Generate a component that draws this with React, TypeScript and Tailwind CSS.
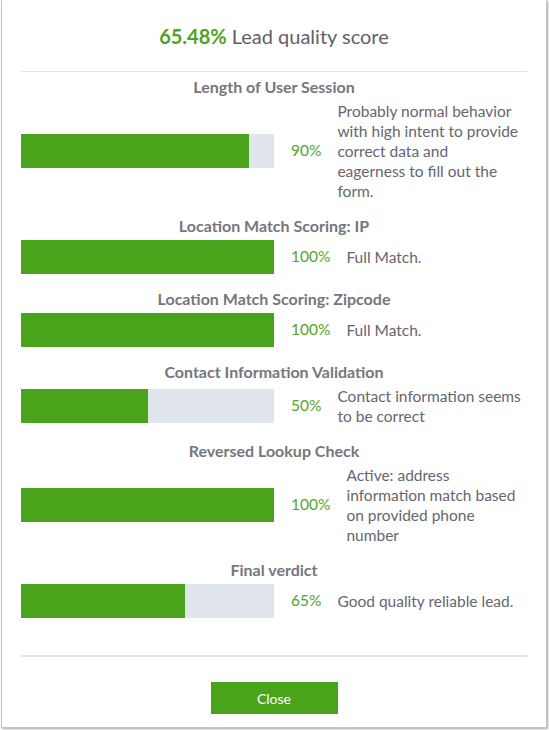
const rows = [
  {
    title: "Length of User Session",
    pct: 90,
    desc: "Probably normal behavior\nwith high intent to provide\ncorrect data and\neagerness to fill out the\nform.",
  },
  { title: "Location Match Scoring: IP", pct: 100, desc: "Full Match." },
  { title: "Location Match Scoring: Zipcode", pct: 100, desc: "Full Match." },
  { title: "Contact Information Validation", pct: 50, desc: "Contact information seems\nto be correct" },
  {
    title: "Reversed Lookup Check",
    pct: 100,
    desc: "Active: address\ninformation match based\non provided phone\nnumber",
  },
  { title: "Final verdict", pct: 65, desc: "Good quality reliable lead." },
];

export default function App() {
  return (
    <div className="w-[549px] h-[730px] bg-white pl-[1px] pr-[2px] pb-[2px] font-['Lato','Liberation_Sans',sans-serif]">
      <div className="h-full border border-t-0 border-[#c4c4c4] shadow-[1px_1px_2px_rgba(0,0,0,0.35)] bg-white px-[19px] flex flex-col">
        <div className="h-[71px] flex items-center justify-center text-[20px] text-[#5f5f67] pt-[1px]">
          <span className="font-bold text-[#4ea322]">65.48%</span>
          <span className="ml-[5px]">Lead quality score</span>
        </div>
        <div className="h-px bg-[#dfe3e9]" />
        <div className="flex flex-col gap-[16px] pt-[6px]">
          {rows.map((r) => (
            <div key={r.title} className="flex flex-col gap-[5px]">
              <div className="h-[18px] leading-[18px] text-center text-[16px] font-bold text-[#76767d]">
                {r.title}
              </div>
              <div className="flex items-center">
                <div className="w-[253px] h-[34px] bg-[#e0e4eb] shrink-0">
                  <div className="h-full bg-[#4aa41b]" style={{ width: `${r.pct}%` }} />
                </div>
                <div className="ml-[17px] text-[15.5px] text-[#55a51f] shrink-0">{r.pct}%</div>
                <div className="ml-[16px] text-[15.5px] leading-[20px] text-[#66666e] flex-1 whitespace-pre-line">
                  {r.desc}
                </div>
              </div>
            </div>
          ))}
        </div>
        <div className="h-[2px] bg-[#e0e4ea] mt-[37px]" />
        <div className="flex justify-center pt-[25px]">
          <button className="w-[127px] h-[32px] bg-[#4aa41b] text-white text-[14px]">Close</button>
        </div>
      </div>
    </div>
  );
}
